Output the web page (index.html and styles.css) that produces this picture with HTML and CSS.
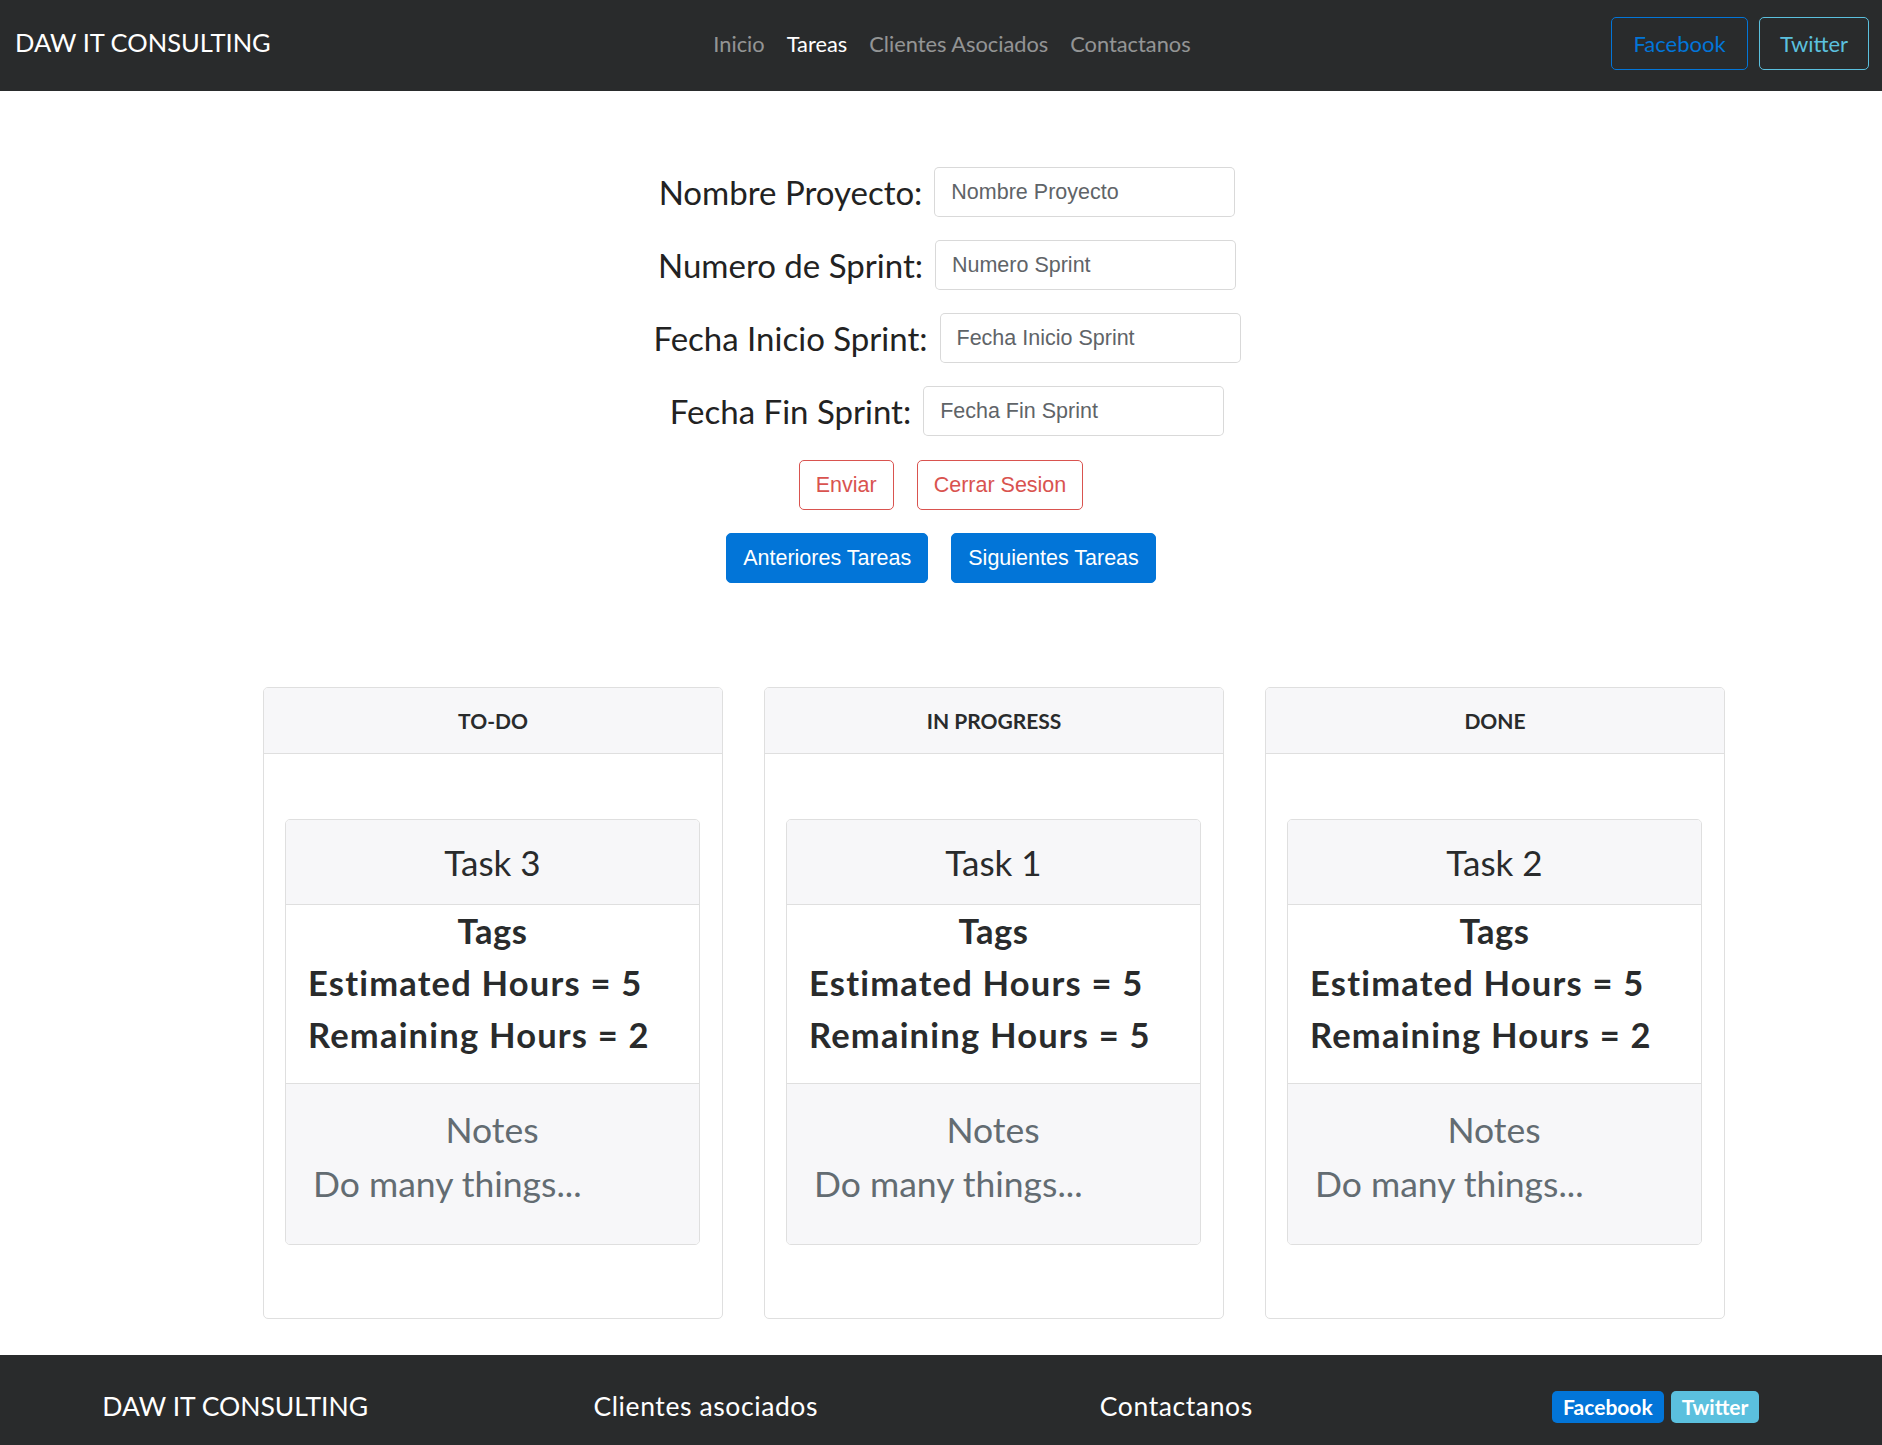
FILE: index.html
```html
<!DOCTYPE html>
<html lang="es">
<head>
<meta charset="utf-8">
<title>DAW IT CONSULTING - Tareas</title>
<link rel="stylesheet" href="styles.css">
</head>
<body>
<nav class="navbar">
  <a class="brand" href="#">DAW IT CONSULTING</a>
  <ul class="nav-links">
    <li><a href="#">Inicio</a></li>
    <li><a class="active" href="#">Tareas</a></li>
    <li><a href="#">Clientes Asociados</a></li>
    <li><a href="#">Contactanos</a></li>
  </ul>
  <div class="social">
    <button class="btn-nav btn-nav-fb">Facebook</button>
    <button class="btn-nav btn-nav-tw">Twitter</button>
  </div>
</nav>

<main>
  <form class="sprint-form">
    <div class="field"><label>Nombre Proyecto:</label><input type="text" placeholder="Nombre Proyecto"></div>
    <div class="field"><label>Numero de Sprint:</label><input type="text" placeholder="Numero Sprint"></div>
    <div class="field"><label>Fecha Inicio Sprint:</label><input type="text" placeholder="Fecha Inicio Sprint"></div>
    <div class="field"><label>Fecha Fin Sprint:</label><input type="text" placeholder="Fecha Fin Sprint"></div>
    <div class="btn-row">
      <button type="button" class="btn btn-danger">Enviar</button>
      <button type="button" class="btn btn-danger">Cerrar Sesion</button>
    </div>
    <div class="btn-row">
      <button type="button" class="btn btn-primary">Anteriores Tareas</button>
      <button type="button" class="btn btn-primary">Siguientes Tareas</button>
    </div>
  </form>

  <section class="board">
    <div class="column">
      <div class="column-header">TO-DO</div>
      <div class="column-body">
        <div class="task">
          <div class="task-header">Task 3</div>
          <div class="task-body">
            <div class="task-tags">Tags</div>
            <div class="task-line">Estimated Hours = 5</div>
            <div class="task-line">Remaining Hours = 2</div>
          </div>
          <div class="task-footer">
            <div class="notes-title">Notes</div>
            <div class="notes-text">Do many things...</div>
          </div>
        </div>
      </div>
    </div>
    <div class="column">
      <div class="column-header">IN PROGRESS</div>
      <div class="column-body">
        <div class="task">
          <div class="task-header">Task 1</div>
          <div class="task-body">
            <div class="task-tags">Tags</div>
            <div class="task-line">Estimated Hours = 5</div>
            <div class="task-line">Remaining Hours = 5</div>
          </div>
          <div class="task-footer">
            <div class="notes-title">Notes</div>
            <div class="notes-text">Do many things...</div>
          </div>
        </div>
      </div>
    </div>
    <div class="column">
      <div class="column-header">DONE</div>
      <div class="column-body">
        <div class="task">
          <div class="task-header">Task 2</div>
          <div class="task-body">
            <div class="task-tags">Tags</div>
            <div class="task-line">Estimated Hours = 5</div>
            <div class="task-line">Remaining Hours = 2</div>
          </div>
          <div class="task-footer">
            <div class="notes-title">Notes</div>
            <div class="notes-text">Do many things...</div>
          </div>
        </div>
      </div>
    </div>
  </section>
</main>

<footer class="footer">
  <div class="footer-col footer-brand">DAW IT CONSULTING</div>
  <div class="footer-col">Clientes asociados</div>
  <div class="footer-col">Contactanos</div>
  <div class="footer-col footer-badges">
    <span class="badge badge-fb">Facebook</span>
    <span class="badge badge-tw">Twitter</span>
  </div>
</footer>
</body>
</html>
```

FILE: styles.css
```css
* { box-sizing: border-box; }

html, body {
  margin: 0;
  padding: 0;
}

body {
  font-family: "Lato", "Noto Sans", sans-serif;
  font-size: 22px;
  line-height: 1.5;
  color: #292b2c;
  background: #fff;
}

/* NAVBAR */
.navbar {
  display: grid;
  grid-template-columns: 1fr auto 1fr;
  align-items: center;
  height: 91px;
  padding: 0 13px 5px 15px;
  background: #292b2c;
}

.brand {
  justify-self: start;
  color: #fff;
  text-decoration: none;
  font-size: 25.5px;
  line-height: 1;
}

.nav-links {
  display: flex;
  list-style: none;
  margin: 0 0 0 20px;
  padding: 0;
}

.nav-links a {
  display: block;
  padding: 8px 11px;
  color: rgba(255, 255, 255, 0.5);
  text-decoration: none;
  font-size: 21.8px;
  line-height: 33px;
}

.nav-links a.active { color: #fff; }

.social {
  justify-self: end;
  display: flex;
  gap: 11px;
}

.btn-nav {
  font-family: "Lato", "Noto Sans", sans-serif;
  font-size: 22px;
  line-height: 33px;
  padding: 9px 18px;
  background: transparent;
  border: 1px solid;
  border-radius: 5px;
}

.btn-nav-fb { color: #0275d8; border-color: #0275d8; width: 137px; }
.btn-nav-tw { color: #5bc0de; border-color: #5bc0de; width: 110px; }

/* FORM */
.sprint-form {
  display: flex;
  flex-direction: column;
  align-items: center;
  padding-top: 76px;
}

.field {
  display: flex;
  align-items: center;
  height: 50px;
  margin-bottom: 23px;
  padding-left: 12px;
}

.field label {
  font-size: 33px;
  line-height: 1;
  margin-right: 12px;
  color: #222;
}

.field input {
  width: 301px;
  height: 50px;
  padding: 8px 16px;
  font-family: "Liberation Sans", Arial, sans-serif;
  font-size: 21.5px;
  color: #464a4c;
  border: 1px solid rgba(0, 0, 0, 0.15);
  border-radius: 5px;
  background: #fff;
}

.field input::placeholder { color: #5f6468; opacity: 1; }

.btn-row {
  display: flex;
  justify-content: center;
  gap: 23px;
  margin-top: 1px;
  margin-bottom: 22px;
}

.btn {
  font-family: "Liberation Sans", Arial, sans-serif;
  font-size: 21.5px;
  line-height: 32px;
  padding: 8px 16px;
  border: 1px solid;
  border-radius: 5px;
  cursor: pointer;
}

.btn-danger {
  color: #d9534f;
  background: #fff;
  border-color: #d9534f;
}

.btn-primary {
  color: #fff;
  background: #0275d8;
  border-color: #0275d8;
}

/* BOARD */
.board {
  display: flex;
  gap: 41px;
  margin: 82px 0 0 263px;
}

.column {
  width: 460px;
  border: 1px solid #dfdfdf;
  border-radius: 5px;
  overflow: hidden;
}

.column-header {
  background: #f7f7f9;
  border-bottom: 1px solid #dfdfdf;
  text-align: center;
  font-weight: 700;
  font-size: 21px;
  line-height: 33px;
  padding: 16px;
}

.column-body {
  padding: 65px 22px 73px 21px;
}

.task {
  border: 1px solid #dfdfdf;
  border-radius: 5px;
  overflow: hidden;
}

.task-header {
  background: #f7f7f9;
  border-bottom: 1px solid #dfdfdf;
  text-align: center;
  font-size: 35px;
  line-height: 52px;
  padding: 16px;
  color: #292b2c;
}

.task-body {
  padding: 0 22px 22px 22px;
  font-weight: 700;
  font-size: 34.5px;
  line-height: 52px;
  letter-spacing: 1.2px;
  color: #292b2c;
}

.task-tags { text-align: center; letter-spacing: 0.5px; }

.task-footer {
  background: #f7f7f9;
  border-top: 1px solid #dfdfdf;
  color: #636c72;
  font-size: 35.5px;
  line-height: 54px;
  padding: 19px 28px 33px 27px;
}

.notes-title { text-align: center; }

/* FOOTER */
.footer {
  display: grid;
  grid-template-columns: repeat(4, 1fr);
  align-items: center;
  margin-top: 36px;
  height: 104px;
  padding-bottom: 1px;
  background: #292b2c;
  color: #fff;
  font-size: 26.5px;
}

.footer-col {
  text-align: center;
  line-height: 1;
  letter-spacing: 0.6px;
}

.footer-col.footer-brand { letter-spacing: 0; }

.footer-badges {
  display: flex;
  justify-content: center;
  gap: 7px;
  margin-left: 18px;
  letter-spacing: 0;
}

.badge {
  display: inline-block;
  font-weight: 700;
  font-size: 21px;
  line-height: 1;
  padding: 5px 11px 6px;
  border-radius: 5px;
  color: #fff;
}

.badge-fb { background: #0275d8; }
.badge-tw { background: #5bc0de; }
```
